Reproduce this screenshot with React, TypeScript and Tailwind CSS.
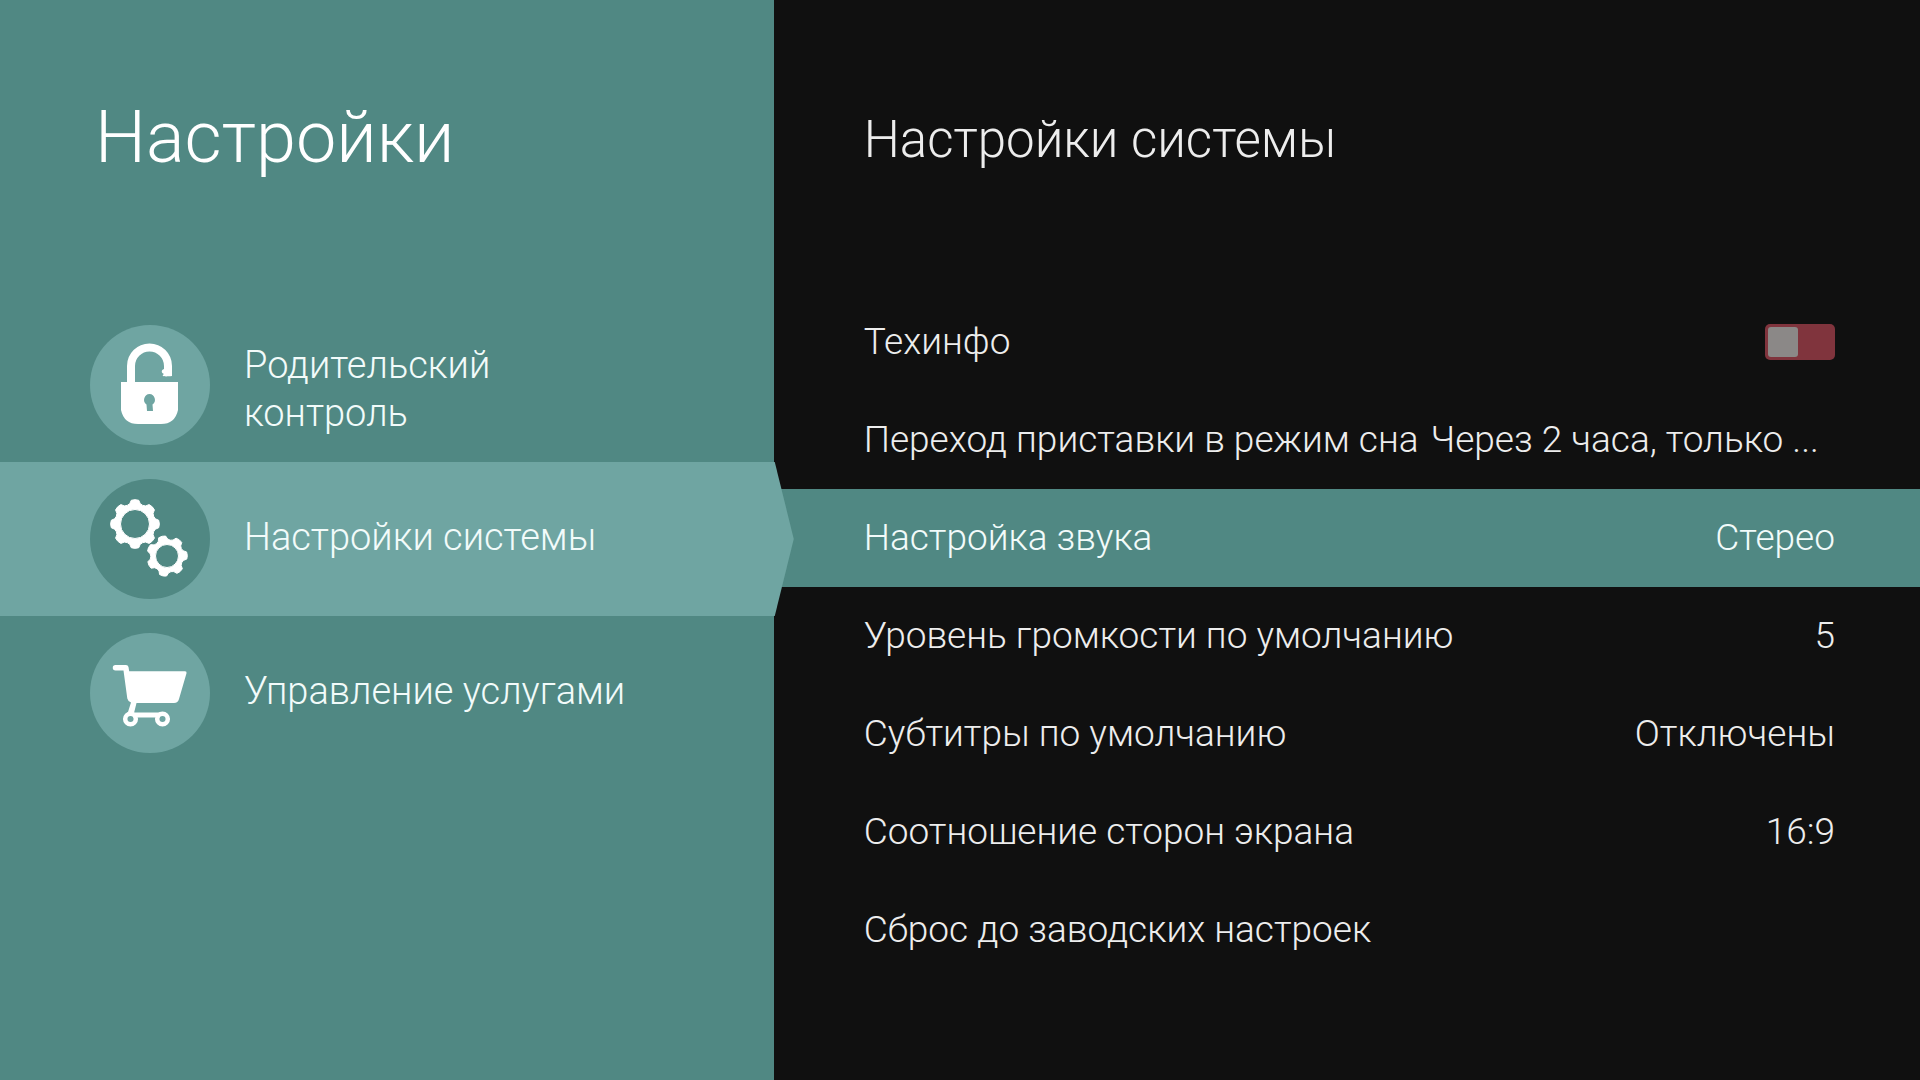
import { useState, type ReactNode } from "react";

function LockIcon() {
  return (
    <svg viewBox="0 0 120 120" className="size-[120px]" aria-hidden="true">
      <path
        d="M41 58V41a18.500 18.500 0 0 1 37 0v9.500"
        fill="none"
        stroke="#fff"
        strokeWidth="8"
      />
      <path d="M74 44c-3 1-3 4 0 5-3 2-1 3 8 2v-8z" fill="#fff" />
      <path
        fill="#fff"
        fillRule="evenodd"
        d="M31 57h57v28q-3 14-17 14H48Q34 99 31 85ZM59.500 69a5.800 5.800 0 0 0-3 10.500L57 86h6l-.5-6.500a5.800 5.800 0 0 0-3-10.500Z"
      />
    </svg>
  );
}

function gearPath(cx: number, cy: number, outer: number, root: number, hole: number, teeth: number, turn: number) {
  const step = (Math.PI * 2) / teeth;
  const at = (r: number, a: number) =>
    `${(cx + r * Math.cos(a)).toFixed(2)} ${(cy + r * Math.sin(a)).toFixed(2)}`;
  let d = "";
  for (let i = 0; i < teeth; i++) {
    const a = turn + i * step;
    d += `${i ? "L" : "M"}${at(root, a - step * 0.32)}`;
    d += `L${at(outer - 0.5, a - step * 0.2)}Q${at(outer + 0.5, a)} ${at(outer - 0.5, a + step * 0.2)}`;
    d += `L${at(root, a + step * 0.32)}Q${at(root - 1.5, a + step * 0.5)} ${at(root, a + step * 0.68)}`;
  }
  d += `ZM${cx - hole} ${cy}a${hole} ${hole} 0 1 0 ${hole * 2} 0a${hole} ${hole} 0 1 0 ${-hole * 2} 0Z`;
  return d;
}

function GearsIcon() {
  return (
    <svg viewBox="0 0 120 120" className="size-[120px]" aria-hidden="true">
      <g fill="#fff" stroke="#fff" strokeWidth="1" strokeLinejoin="round" fillRule="evenodd">
        <path d={gearPath(45, 45, 24.5, 21, 14.5, 8, -Math.PI / 2)} />
        <path d={gearPath(77, 77, 20.5, 17, 11.5, 7, -1.82)} />
      </g>
    </svg>
  );
}

function CartIcon() {
  return (
    <svg viewBox="0 0 120 120" className="size-[120px]" aria-hidden="true">
      <path
        fill="#fff"
        d="M25.500 32H36q2 0 2.500 2l.7 4.300H95q2 0 1.500 2L89 66q-1 4-5 4H46.500l-2.500 10-6-1 3-9.500q-3-1-3.700-4L33.500 37.500h-8a2.700 2.700 0 0 1 0-5.500Z"
      />
      <g fill="none" stroke="#fff">
        <circle cx="40.500" cy="86" r="5.300" strokeWidth="4.500" />
        <circle cx="72.500" cy="86" r="5.300" strokeWidth="4.500" />
        <path d="M43 82h27" strokeWidth="5" />
      </g>
    </svg>
  );
}

const sections: { label: string; icon: ReactNode; twoLine?: boolean }[] = [
  { label: "Родительский контроль", icon: <LockIcon />, twoLine: true },
  { label: "Настройки системы", icon: <GearsIcon /> },
  { label: "Управление услугами", icon: <CartIcon /> },
];

const options = [
  { label: "Переход приставки в режим сна", value: "Через 2 часа, только ...", joined: true },
  { label: "Настройка звука", value: "Стерео", active: true },
  { label: "Уровень громкости по умолчанию", value: "5" },
  { label: "Субтитры по умолчанию", value: "Отключены" },
  { label: "Соотношение сторон экрана", value: "16:9" },
  { label: "Сброс до заводских настроек", value: "" },
];

export default function App() {
  const [techInfo, setTechInfo] = useState(false);

  return (
    <div className="flex min-h-screen bg-[#101010] font-['Roboto',sans-serif] text-[37px] font-light text-[#ededed]">
      <aside className="w-[40.3%] shrink-0 bg-[#508883] text-[#f2fbfa]">
        <h1 className="pt-[96px] pl-[95px] text-[72px] leading-[84px] text-white">Настройки</h1>
        <nav className="mt-[128px] text-[38px]">
          {sections.map((section, index) => {
            const active = index === 1;
            return (
              <button
                key={section.label}
                type="button"
                aria-current={active ? "page" : undefined}
                className={`relative flex h-[154px] w-full items-center gap-[34px] pl-[90px] text-left leading-[48px] ${active ? "bg-[#6fa5a2]" : ""}`}
              >
                <span className={`shrink-0 rounded-full ${active ? "bg-[#508883]" : "bg-[#6fa5a2]"}`}>
                  {section.icon}
                </span>
                <span className={`max-w-[400px] ${section.twoLine ? "pt-2" : "pb-1"}`}>{section.label}</span>
                {active && (
                  <span className="absolute top-0 left-full h-full w-[20px] bg-[#6fa5a2] [clip-path:polygon(0_0,1px_0,100%_50%,1px_100%,0_100%)]" />
                )}
              </button>
            );
          })}
        </nav>
      </aside>

      <main className="min-w-0 flex-1">
        <h2 className="pt-[110px] pl-[90px] text-[51px] leading-[60px]">Настройки системы</h2>
        <div className="mt-[123px]">
          <div className="flex h-[98px] items-center justify-between pr-[85px] pl-[90px]">
            <label htmlFor="tech-info">Техинфо</label>
            <input
              id="tech-info"
              type="checkbox"
              role="switch"
              checked={techInfo}
              onChange={(event) => setTechInfo(event.target.checked)}
              className="h-[36px] w-[70px] appearance-none rounded-[5px] bg-[#80343d] p-[3px] before:block before:h-[30px] before:w-[30px] before:rounded-[3px] before:bg-[#8b8887] checked:before:ml-auto"
            />
          </div>
          {options.map((option) => (
            <button
              key={option.label}
              type="button"
              className={`flex h-[98px] w-full items-center pr-[85px] pl-[90px] text-left whitespace-nowrap ${option.joined ? "gap-3" : "justify-between"} ${option.active ? "bg-[#508883] text-[#f2fbfa]" : ""}`}
            >
              <span>{option.label}</span>
              <span>{option.value}</span>
            </button>
          ))}
        </div>
      </main>
    </div>
  );
}
